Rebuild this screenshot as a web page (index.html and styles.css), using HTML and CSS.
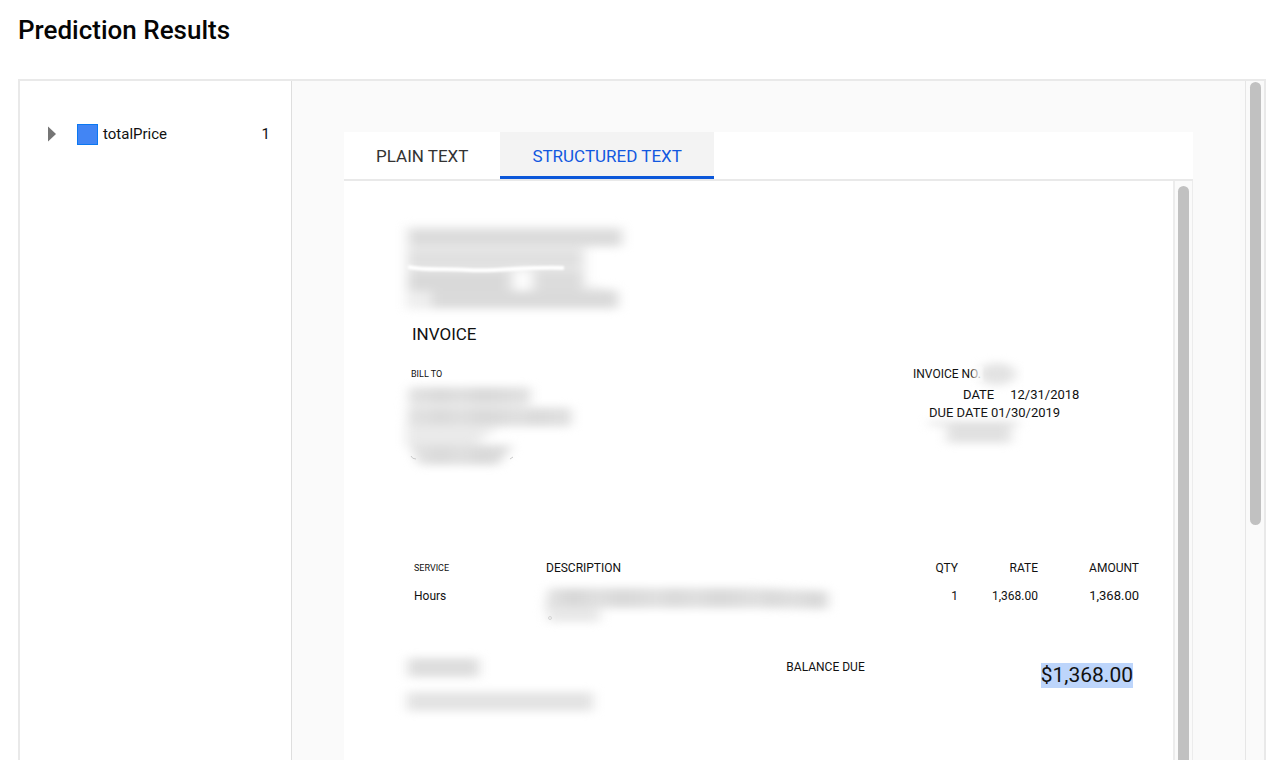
FILE: index.html
```html
<!DOCTYPE html>
<html lang="en">
<head>
<meta charset="utf-8">
<meta name="viewport" content="width=device-width, initial-scale=1">
<title>Prediction Results</title>
<link rel="stylesheet" href="styles.css">
</head>
<body>
<svg class="defs" width="0" height="0" aria-hidden="true">
  <defs>
    <filter id="soft" x="-20%" y="-60%" width="140%" height="220%" color-interpolation-filters="sRGB"><feGaussianBlur stdDeviation="6 4"/></filter>
    <filter id="line-soft" x="-5%" y="-200%" width="110%" height="500%" color-interpolation-filters="sRGB"><feGaussianBlur stdDeviation="1"/></filter>
    <linearGradient id="streaks" gradientUnits="userSpaceOnUse" x1="0" x2="97" y1="0" y2="0" spreadMethod="repeat">
      <stop offset="0" stop-color="#dcdcdc"/><stop offset=".2" stop-color="#e1e1e1"/><stop offset=".35" stop-color="#dadada"/><stop offset=".6" stop-color="#e0e0e0"/><stop offset=".8" stop-color="#d9d9d9"/><stop offset="1" stop-color="#dcdcdc"/>
    </linearGradient>
  </defs>
</svg>
<h1 class="title">Prediction Results</h1>
<div class="panel">
  <aside class="labels">
    <div class="label-row">
      <button class="expander" aria-label="Expand totalPrice"><svg width="8" height="16" viewBox="0 0 8 16"><path d="M0 0.5 8 8 0 15.5z" fill="#757575"/></svg></button>
      <span class="swatch"></span>
      <span class="label-name">totalPrice</span>
      <span class="label-count">1</span>
    </div>
  </aside>
  <main class="viewer">
    <div class="tabs" role="tablist">
      <button class="tab" role="tab" aria-selected="false">PLAIN TEXT</button>
      <button class="tab tab-active" role="tab" aria-selected="true">STRUCTURED TEXT</button>
    </div>
    <div class="sheet">
      <article class="document">
        <svg class="smudge" width="226" height="94" viewBox="0 0 226 94" aria-hidden="true">
          <g filter="url(#soft)">
            <path d="M2 4H218V25H182V62L214 68V87H2z" fill="#eeeeee"/>
            <rect x="6" y="8" width="212" height="16" fill="#dbdbdb"/>
            <rect x="5" y="28" width="172" height="18" fill="#e0e0e0"/>
            <rect x="5" y="49" width="100" height="20" fill="#d9d9d9"/>
            <rect x="132" y="49" width="46" height="20" fill="#dcdcdc"/>
            <rect x="112" y="48" width="13" height="22" fill="#fff"/>
            <rect x="28" y="69" width="186" height="17" fill="#dadada"/>
          </g>
          <path d="M4 45C25 49 40 46 65 48S130 44 160 46" fill="none" stroke="#fff" stroke-width="4" filter="url(#line-soft)"/>
        </svg>
        <h2 class="doc-title">INVOICE</h2>
        <section class="parties">
          <div class="bill-to">
            <div class="tiny">BILL TO</div>
            <svg class="smudge" width="176" height="90" viewBox="0 0 176 90" aria-hidden="true">
              <g filter="url(#soft)" fill="url(#streaks)">
                <path d="M4 6H120V24H164V44H95L76 60H2z" fill="#f0f0f0"/>
                <rect x="6" y="4" width="120" height="17"/>
                <rect x="5" y="25" width="162" height="18"/>
                <path d="M2 42H84L70 63H2z" fill="#eaeaea"/>
                <path d="M6 62H109L94 82H15z"/>
              </g>
              <path d="M7 73q1 3 5 3M106 76l3-2" stroke="#c9c9c9" fill="none"/>
            </svg>
          </div>
          <div class="meta">
            <div class="meta-number">INVOICE NO.
              <svg class="number-smudge" width="46" height="26" viewBox="0 0 46 26" aria-hidden="true"><ellipse cx="22" cy="13" rx="19" ry="11" fill="#e3e3e3" filter="url(#soft)"/><rect x="-2" y="5" width="10" height="16" fill="#fff" opacity=".5" filter="url(#line-soft)"/></svg>
            </div>
            <div class="meta-date"><span>DATE</span><span>12/31/2018</span></div>
            <div class="meta-due">DUE DATE 01/30/2019</div>
            <svg class="smudge terms-smudge" width="100" height="26" viewBox="0 0 100 26" aria-hidden="true"><g filter="url(#soft)"><rect x="2" y="0" width="90" height="3" fill="#d6d6d6"/><rect x="20" y="3" width="64" height="18" fill="#e1e1e1"/></g></svg>
          </div>
        </section>
        <table class="items">
          <colgroup><col class="col-service"><col><col class="col-qty"><col class="col-rate"><col class="col-amount"></colgroup>
          <thead><tr><th class="tiny">SERVICE</th><th>DESCRIPTION</th><th class="num">QTY</th><th class="num">RATE</th><th class="num">AMOUNT</th></tr></thead>
          <tbody><tr>
            <td>Hours</td>
            <td><svg class="smudge item-smudge" width="292" height="42" viewBox="0 0 292 42" aria-hidden="true">
              <g filter="url(#soft)" fill="url(#streaks)"><path d="M7 5H210L286 8V26L220 25H50L3 28z"/><rect x="6" y="24" width="52" height="15" fill="#e8e8e8"/><rect x="20" y="7" width="22" height="15" fill="#d8d8d8"/></g>
              <circle cx="8" cy="35" r="1.5" fill="none" stroke="#d4d4d4"/>
            </svg></td>
            <td class="num">1</td><td class="num">1,368.00</td><td class="num line-amount">1,368.00</td>
          </tr></tbody>
        </table>
        <section class="summary">
          <svg class="smudge" width="196" height="62" viewBox="0 0 196 62" aria-hidden="true">
            <g filter="url(#soft)"><rect x="4" y="5" width="71" height="19" fill="#dddddd"/><rect x="3" y="39" width="186" height="19" fill="#e3e3e3"/></g>
          </svg>
          <div class="balance"><span class="balance-label">BALANCE DUE</span><mark class="total">$1,368.00</mark></div>
        </section>
      </article>
      <div class="track track-inner"><div class="thumb"></div></div>
    </div>
  </main>
  <div class="track track-outer"><div class="thumb"></div></div>
</div>
</body>
</html>
```
FILE: styles.css
```css
* { box-sizing: border-box; }
body {
  margin: 0;
  min-height: 100vh;
  display: flex;
  flex-direction: column;
  background: #fff;
  color: #111;
  font-family: Roboto, "Liberation Sans", sans-serif;
}
button { border: 0; padding: 0; background: none; font: inherit; cursor: pointer; }
svg { display: block; }
.defs { position: absolute; }
.title {
  margin: 0;
  padding: 14px 18px 33px;
  font-size: 26px;
  line-height: 32px;
  font-weight: 500;
  color: #050505;
}
.panel {
  flex: 1;
  display: flex;
  margin: 0 14px 0 18px;
  border: 2px solid #e9e9e9;
  border-bottom: 0;
}
.labels {
  flex: 0 0 272px;
  padding: 42px 21px 0 28px;
  border-right: 1px solid #dedede;
}
.label-row { display: flex; align-items: center; font-size: 15px; line-height: 22px; }
.expander { margin-right: 21px; }
.swatch {
  width: 21px;
  height: 21px;
  margin-right: 5px;
  background: #4285f4;
  border: 1px solid #0b78f2;
}
.label-name { flex: 1; }
.viewer {
  flex: 1;
  min-width: 0;
  display: flex;
  flex-direction: column;
  padding: 51px 52px 0 52px;
  background: #fafafa;
}
.tabs { display: flex; background: #fff; border-bottom: 2px solid #e9e9e9; }
.tab {
  height: 47px;
  padding: 3px 32px 0;
  border-bottom: 3px solid transparent;
  font-size: 17px;
  font-weight: 400;
  color: #333;
}
.tab-active { background: #f3f3f3; border-color: #0b57d9; color: #1158e0; }
.sheet { flex: 1; display: flex; background: #fff; }
.document { flex: 1; min-width: 0; padding: 41px 34px 40px 60px; font-size: 12px; line-height: 18px; }
.smudge { overflow: visible; }
.doc-title { margin: 8px 0 0; padding-left: 8px; font-size: 17px; line-height: 20px; font-weight: 400; }
.tiny { font-size: 9px; }
.parties { display: flex; justify-content: space-between; margin-top: 21px; }
.bill-to .tiny { padding-left: 7px; }
.meta { width: 226px; font-size: 13px; }
.meta-number { display: flex; align-items: center; height: 21px; padding-bottom: 3px; font-size: 12px; }
.number-smudge { margin: 0 0 0 -6px; overflow: visible; }
.meta-date { display: flex; gap: 16px; padding-left: 50px; }
.meta-due { padding-left: 16px; }
.terms-smudge { margin-left: 14px; }
.items { width: 100%; margin-top: 86px; border-collapse: collapse; table-layout: fixed; }
.items th, .items td { padding: 0 0 0 10px; font-weight: 400; text-align: left; vertical-align: top; }
.items td { padding-top: 10px; }
.items .num { padding-left: 0; text-align: right; }
.items .line-amount { font-size: 13px; }
.col-service { width: 132px; }
.col-qty, .col-rate { width: 80px; }
.col-amount { width: 101px; }
.item-smudge { margin: -4px 0 0 -4px; }
.summary { display: flex; justify-content: space-between; margin-top: 28px; }
.balance { display: flex; align-items: flex-start; gap: 176px; padding: 5px 6px 0 0; }
.total { margin-top: 5px; background: #bdd5fb; color: #111; font-size: 21px; line-height: 25px; }
.track { flex: none; background: #fafafa; }
.track-inner { width: 20px; padding: 5px 0 0 3px; border-left: 2px solid #ececec; border-right: 1px solid #ececec; display: flex; }
.track-outer { width: 19px; padding: 1px 0 0 4px; border-left: 1px solid #e6e6e6; }
.thumb { width: 11px; height: 443px; border-radius: 6px; background: #c1c1c1; }
.track-inner .thumb { height: auto; border-radius: 6px 6px 0 0; }
```
